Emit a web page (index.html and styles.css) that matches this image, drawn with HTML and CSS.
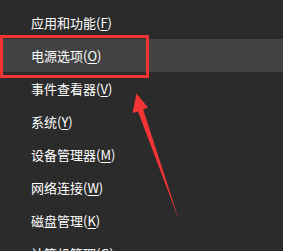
FILE: index.html
```html
<!DOCTYPE html>
<html lang="zh-CN">
<head>
<meta charset="utf-8">
<link rel="stylesheet" href="styles.css">
</head>
<body>
<div class="screen">
  <ul class="menu">
    <li class="item">应用和功能(<u>F</u>)</li>
    <li class="item active">电源选项(<u>O</u>)</li>
    <li class="item">事件查看器(<u>V</u>)</li>
    <li class="item">系统(<u>Y</u>)</li>
    <li class="item">设备管理器(<u>M</u>)</li>
    <li class="item">网络连接(<u>W</u>)</li>
    <li class="item">磁盘管理(<u>K</u>)</li>
    <li class="item">计算机管理(<u>G</u>)</li>
  </ul>
  <div class="mark"></div>
  <svg class="arrow" width="283" height="251" viewBox="0 0 283 251">
    <polygon points="136.5,93.5 148,107.5 143.2,109.5 179.5,221.5 138,111.5 132.5,113" fill="#f23434"/>
  </svg>
</div>
</body>
</html>
```
FILE: styles.css
```css
html, body {
  margin: 0;
  padding: 0;
  background: #2b2b2b;
}
.screen {
  position: relative;
  width: 283px;
  height: 251px;
  overflow: hidden;
  background: #2b2b2b;
}
.menu {
  list-style: none;
  margin: 0;
  padding: 6px 0 0 0;
}
.item {
  height: 33px;
  line-height: 33px;
  padding-left: 31px;
  font-family: "Noto Sans CJK SC", "Microsoft YaHei", sans-serif;
  font-size: 13px;
  color: #ffffff;
  white-space: nowrap;
}
.item u {
  text-decoration: underline;
  text-underline-offset: 2px;
}
.active {
  background: #424242;
}
.mark {
  position: absolute;
  left: 0;
  top: 35px;
  width: 143px;
  height: 37px;
  border: 3px solid #f23434;
}
.arrow {
  position: absolute;
  left: 0;
  top: 0;
}
```
